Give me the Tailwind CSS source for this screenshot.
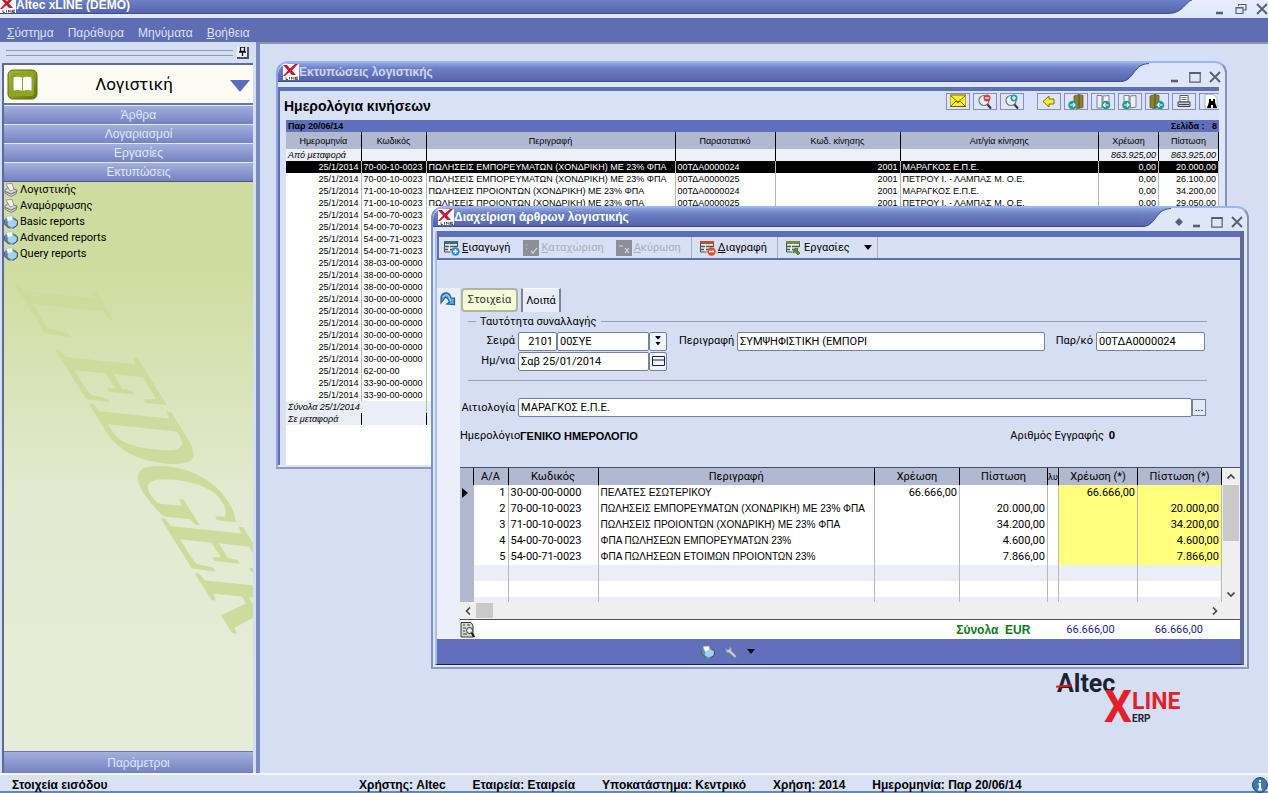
<!DOCTYPE html>
<html lang="el">
<head>
<meta charset="utf-8">
<title>Altec xLINE (DEMO)</title>
<script src="https://cdn.jsdelivr.net/npm/@tailwindcss/browser@4"></script>
</head>
<body class="flex h-screen flex-col overflow-hidden bg-[#d6def3] font-[Roboto,'Liberation_Sans',sans-serif] text-[11px] leading-4 text-black">

<svg class="absolute size-0" aria-hidden="true">
  <symbol id="app" viewBox="0 0 16 16"><rect width="16" height="16" fill="#fff"/><path d="M0 1h4l3 3.500L12 0h3L9 6.500 13 11h-4L6.500 8.200 2 12H0l5-5.500z" fill="#c01c34"/><path d="M3 13.200v2.300h2M6.500 13v2.500M8.500 15.500V13l2.500 2.500V13M15 13.200h-2.500v2.300H15M12.500 14.400h2" fill="none" stroke="#333" stroke-width=".8"/></symbol>
  <linearGradient id="tb" x1="0" y1="0" x2="0" y2="1"><stop offset="0" stop-color="#8fa6e2"/><stop offset=".3" stop-color="#6d7fc6"/><stop offset="1" stop-color="#5664ac"/></linearGradient>
  <symbol id="curve" viewBox="0 0 30 20"><path d="M0 0h30C20 1 18 6 13 12 9 17 6 19 0 19z" fill="url(#tb)"/><path d="M30 .5C20 1 18 6 13 12 9 17 6 18.500 0 18.500" fill="none" stroke="#3f4d8c" stroke-width="1"/></symbol>
  <symbol id="printer" viewBox="0 0 14 14"><path d="M1 7 5 4l8 3-1 4-5 2.500L1 10z" fill="#d9d9d4" stroke="#666" stroke-width=".8"/><path d="M2 1l6-.5 2 6-4 1.500z" fill="#fff" stroke="#777" stroke-width=".7"/><path d="M1.500 8.500 7 11l5.500-2.500" fill="none" stroke="#555" stroke-width=".9"/><path d="M8 12.500l3-1.500" stroke="#b5a642"/></symbol>
  <symbol id="report" viewBox="0 0 14 14"><path d="M0 5 3 2h6l5 4v4l-5 3.500H5L0 9z" fill="#5b8fb8"/><path d="M2 1.500l6-.5 1 4-5 2z" fill="#fff" stroke="#8aa9c4" stroke-width=".5"/><path d="M4 6.500l5-2 4 2-1 4-4 2-4-2z" fill="#a5d3ee"/><path d="M.5 5v4l4.500 4" stroke="#596672" stroke-width="1.200" fill="none"/><path d="M10.500 3l3 3v4L9 13.500" stroke="#4a5560" fill="none"/></symbol>
  <symbol id="form" viewBox="0 0 16 16"><path d="M1 2h12v9H1z" fill="#e9eee4"/><path d="M0 1h14v3H0z"/><path d="M1 6.500h4M6 6.500h7M1 9.500h3M6 9.500h6" stroke="#4b5560" stroke-width="1.500"/><path d="M.5 3v9h6M13.500 3v4" fill="none" stroke="#4b5560"/></symbol>
  <symbol id="book" viewBox="0 0 16 16"><path d="M6 2l5-1.500 4 1v12l-5 1-4-1z" fill="#8a8130" stroke="#55501c" stroke-width=".7"/><path d="M11 .5V14" stroke="#55501c"/></symbol>
  <symbol id="page" viewBox="0 0 16 16"><path d="M2 1.500h5V14H2zM8 2l6-.5V13l-6 1z" fill="#eef0f8" stroke="#667" stroke-width=".8"/></symbol>
  <symbol id="dotL" viewBox="0 0 16 16"><circle cx="4.500" cy="11" r="4.300" fill="#1f9a9a"/><path d="M2 11h5M5 8.800 7 11l-2 2.200" stroke="#fff" stroke-width="1.200" fill="none"/></symbol>
  <symbol id="dotR" viewBox="0 0 16 16"><circle cx="11" cy="11" r="4.300" fill="#1f9a9a"/><path d="M13.500 11h-5M10.500 8.800 8.500 11l2 2.200" stroke="#fff" stroke-width="1.200" fill="none"/></symbol>
  <symbol id="lens" viewBox="0 0 16 16"><circle cx="7" cy="6.500" r="5" fill="#eef1fa" stroke="#777" stroke-width="1.200"/><path d="M10.500 10.500 14 14.500" stroke="#333" stroke-width="2"/></symbol>
  <symbol id="min" viewBox="0 0 12 12"><path d="M2 10h7" stroke="#5a5f78" stroke-width="2.600"/></symbol>
  <symbol id="max" viewBox="0 0 12 12"><path d="M.8 1.500h10.400v9.700H.8z" fill="none" stroke="#5a5f78" stroke-width="1.200"/><path d="M.5 2h11" stroke="#5a5f78" stroke-width="2"/></symbol>
  <symbol id="close" viewBox="0 0 12 12"><path d="M1 1l10 10M11 1 1 11" stroke="#5a5f78" stroke-width="1.900"/></symbol>
</svg>

<!-- Application title bar -->
<header class="flex h-[18px] shrink-0 bg-linear-to-b from-[#e8eefc] to-[#dde6fa]">
  <div class="flex h-[14px] flex-1 items-end border-b border-[#3f4d8c] bg-linear-to-b from-[#6d7fc6] to-[#5664ac]">
    <svg class="size-4 shrink-0"><use href="#app"/></svg>
    <h1 class="font-['Liberation_Sans',sans-serif] text-xs leading-[15px] font-bold text-white">Altec xLINE (DEMO)</h1>
  </div>
  <svg class="h-[14px] w-6 shrink-0" viewBox="0 0 24 14"><defs><linearGradient id="tb2" x1="0" y1="0" x2="0" y2="1"><stop offset="0" stop-color="#6d7fc6"/><stop offset="1" stop-color="#5664ac"/></linearGradient></defs><path d="M0 0h24C17 2 15 13.500 0 13.500z" fill="url(#tb2)"/><path d="M24 0C17 2 15 13.500 0 13.500" fill="none" stroke="#3f4d8c"/></svg>
  <div class="flex w-[76px] shrink-0 items-center justify-end gap-[9px]">
    <button aria-label="Ελαχιστοποίηση" class="size-3"><svg class="size-3"><use href="#min"/></svg></button>
    <button aria-label="Επαναφορά" class="size-3"><svg class="size-3" viewBox="0 0 12 12"><path d="M3.500 3V1.500H11v5.500H8.500M1 4.500h7v6H1zM1 5h7" fill="none" stroke="#5a5f78" stroke-width="1.200"/></svg></button>
    <button aria-label="Κλείσιμο" class="size-3"><svg class="size-3"><use href="#close"/></svg></button>
  </div>
</header>

<nav class="flex h-6 shrink-0 items-center gap-[14px] bg-[#5f6db4] px-[7px] pt-[5px] font-['Liberation_Sans',sans-serif] text-xs text-[#dbe2f8]">
  <a href="#"><u>Σ</u>ύστημα</a><a href="#">Παράθυρα</a><a href="#">Μηνύματα</a><a href="#"><u>Β</u>οήθεια</a>
</nav>

<div class="flex min-h-0 flex-1">
  <!-- Module navigation -->
  <aside class="flex w-[260px] shrink-0 flex-col border-r-4 border-[#7c8bbd] pl-[2px]">
    <div class="flex h-[21px] shrink-0 items-center gap-1 pr-[7px] pl-1">
      <div class="h-[6px] flex-1 border-y border-[#8c96b4]"></div>
      <button aria-label="Καρφίτσωμα" class="flex size-3 items-center justify-center border-r-2 border-b-2 border-[#4d5468] bg-[#eef1fa]"><svg class="size-[9px]" viewBox="0 0 9 9"><path d="M2.500 0h4v4.500h-4zM1 5h7M4.500 5v4" stroke="#111" fill="none" stroke-width="1.300"/></svg></button>
    </div>
    <div class="mr-[3px] flex min-h-0 flex-1 flex-col border-t-2 border-l-2 border-[#5b6b95]">
      <div class="flex h-[38px] shrink-0 items-center bg-[#fdfcf4] px-[3px]">
        <svg class="size-[31px]" viewBox="0 0 31 31"><defs><linearGradient id="gr" x1="0" y1="0" x2="1" y2="1"><stop offset="0" stop-color="#a9b93c"/><stop offset=".5" stop-color="#8aa21c"/><stop offset="1" stop-color="#5f7410"/></linearGradient></defs><rect x="1" y="1" width="29" height="29" rx="5" fill="url(#gr)" stroke="#5d6e1a"/><rect x="4" y="4" width="23" height="23" rx="3" fill="#8fa52a"/><path d="M15.500 9C13 7.500 9 7.500 6.500 8.500v13c3-1 6.500-.5 9 .5 2.500-1 6-1.500 9-.5v-13C22 7.500 18 7.500 15.500 9z" fill="#fff"/><path d="M15.500 9v13" stroke="#8fa52a"/></svg>
        <h2 class="flex-1 text-center text-[17px] leading-6">Λογιστική</h2>
        <svg class="mt-1 h-3 w-5" viewBox="0 0 20 12"><path d="M0 0h20L10 12z" fill="#5b6dc0"/></svg>
      </div>
      <div class="flex shrink-0 flex-col border-t-2 border-b border-t-[#6a76a8] border-b-[#4a5683] font-['Liberation_Sans',sans-serif] text-xs text-[#dfe6fb]">
        <button class="h-[19px] border-t border-[#e3e9fa] bg-linear-to-b from-[#a5afdb] to-[#7482c2] pl-5">Άρθρα</button>
        <button class="h-[19px] border-t border-[#e3e9fa] bg-linear-to-b from-[#a5afdb] to-[#7482c2] pl-5">Λογαριασμοί</button>
        <button class="h-[19px] border-t border-[#e3e9fa] bg-linear-to-b from-[#a5afdb] to-[#7482c2] pl-5">Εργασίες</button>
        <button class="h-[19px] border-t border-[#e3e9fa] bg-linear-to-b from-[#a5afdb] to-[#7482c2] pl-5">Εκτυπώσεις</button>
      </div>
      <div class="relative min-h-0 flex-1 overflow-hidden bg-linear-to-b from-[#cfdc9f] from-15% via-[#e3ead0] via-55% to-[#e6ecd9]">
        <svg class="absolute inset-0 size-full" viewBox="0 0 250 570" preserveAspectRatio="xMinYMin slice" aria-hidden="true"><g fill="#cddb9c"><text x="-78 0 64 130 200 264" transform="translate(50 166) rotate(58) skewX(-38)" font-family="Liberation Serif, serif" font-weight="bold" font-size="100">LEDGER</text></g></svg>
        <ul class="relative">
          <li><a href="#" class="flex items-center gap-[2px]"><svg class="size-[14px]"><use href="#printer"/></svg>Λογιστικής</a></li>
          <li><a href="#" class="flex items-center gap-[2px]"><svg class="size-[14px]"><use href="#printer"/></svg>Αναμόρφωσης</a></li>
          <li><a href="#" class="flex items-center gap-[2px]"><svg class="size-[14px]"><use href="#report"/></svg>Basic reports</a></li>
          <li><a href="#" class="flex items-center gap-[2px]"><svg class="size-[14px]"><use href="#report"/></svg>Advanced reports</a></li>
          <li><a href="#" class="flex items-center gap-[2px]"><svg class="size-[14px]"><use href="#report"/></svg>Query reports</a></li>
        </ul>
      </div>
      <button class="h-[22px] shrink-0 border-t border-[#6a76a8] bg-linear-to-b from-[#a5afdb] to-[#7482c2] pl-5 font-['Liberation_Sans',sans-serif] text-xs text-[#dfe6fb]">Παράμετροι</button>
    </div>
  </aside>

  <!-- Desktop with floating windows -->
  <main class="relative flex-1 border-t-2 border-[#8b95a8]">

    <section aria-label="Εκτυπώσεις λογιστικής" class="absolute top-[17px] right-[41px] left-[16px] flex h-[408px] flex-col rounded-t-xl border-2 border-t-[#9db5ec] border-r-[#8694bb] border-b-[#8d9cc4] border-l-[#8ea6dc] bg-[#dde6fa] font-['Liberation_Sans',sans-serif]">
      <div class="flex h-6 shrink-0">
        <div class="flex h-[19px] flex-1 items-center rounded-tl-xl border-b border-[#3f4d8c] bg-linear-to-b from-[#8fa6e2] via-[#6d7fc6] via-30% to-[#5664ac] pl-[5px]">
          <svg class="size-4"><use href="#app"/></svg><h2 class="text-xs font-bold text-[#cdd6f3]">Εκτυπώσεις λογιστικής</h2>
        </div>
        <svg class="h-5 w-[30px] shrink-0"><use href="#curve"/></svg>
        <div class="flex w-[76px] shrink-0 items-center justify-end gap-2 pt-1 pr-1">
          <button aria-label="Ελαχιστοποίηση" class="size-3"><svg class="size-3"><use href="#min"/></svg></button>
          <button aria-label="Μεγιστοποίηση" class="size-3"><svg class="size-3"><use href="#max"/></svg></button>
          <button aria-label="Κλείσιμο" class="size-3"><svg class="size-3"><use href="#close"/></svg></button>
        </div>
      </div>
      <div class="mr-[6px] mb-[2px] flex flex-1 flex-col border-t-4 border-l-2 border-[#6070b4] bg-[#d9e1f6]">
        <div class="flex h-[29px] shrink-0 items-center justify-between pl-1">
          <h3 class="text-sm font-bold">Ημερολόγια κινήσεων</h3>
          <div class="mt-[2px] flex gap-[3px] self-start">
            <button aria-label="Αποστολή" class="flex h-[17px] w-6 justify-center border border-[#8191c4] bg-[#dfe5f6]"><svg class="size-4" viewBox="0 0 16 16"><path d="M0 1h16v11.500H0z" fill="#ffef2e" stroke="#6b6400"/><path d="M1 12l5-5 2 2 2-2 5 5M1 2l7 6 7-6" fill="none" stroke="#6b6400" stroke-width=".9"/></svg></button>
            <button aria-label="Σμίκρυνση" class="flex h-[17px] w-6 justify-center border border-[#8191c4] bg-[#dfe5f6]"><svg class="size-4" viewBox="0 0 16 16"><use href="#lens"/><circle cx="10" cy="4" r="3.500" fill="#d2463c"/><path d="M8 4h4" stroke="#fff" stroke-width="1.200"/></svg></button>
            <button aria-label="Μεγέθυνση" class="mr-[10px] flex h-[17px] w-6 justify-center border border-[#8191c4] bg-[#dfe5f6]"><svg class="size-4" viewBox="0 0 16 16"><use href="#lens"/><circle cx="10" cy="4" r="3.500" fill="#2a9c9c"/><path d="M8 4h4M10 2v4" stroke="#fff" stroke-width="1.200"/></svg></button>
            <button aria-label="Πίσω" class="flex h-[17px] w-6 justify-center border border-[#8191c4] bg-[#dfe5f6]"><svg class="size-4" viewBox="0 0 16 16"><path d="M2 7.500 8 2v3h5v5H8v3z" fill="#ffe92e" stroke="#7d7308"/></svg></button>
            <button aria-label="Πρώτη σελίδα" class="flex h-[17px] w-6 justify-center border border-[#8191c4] bg-[#dfe5f6]"><svg class="size-4" viewBox="0 0 16 16"><use href="#book"/><use href="#dotL"/></svg></button>
            <button aria-label="Προηγούμενη σελίδα" class="flex h-[17px] w-6 justify-center border border-[#8191c4] bg-[#dfe5f6]"><svg class="size-4" viewBox="0 0 16 16"><use href="#page"/><use href="#dotR"/></svg></button>
            <button aria-label="Επόμενη σελίδα" class="flex h-[17px] w-6 justify-center border border-[#8191c4] bg-[#dfe5f6]"><svg class="size-4" viewBox="0 0 16 16"><use href="#page"/><use href="#dotL"/></svg></button>
            <button aria-label="Τελευταία σελίδα" class="flex h-[17px] w-6 justify-center border border-[#8191c4] bg-[#dfe5f6]"><svg class="size-4" viewBox="0 0 16 16"><g transform="translate(-5 0)"><use href="#book" width="16" height="16"/></g><use href="#dotR"/></svg></button>
            <button aria-label="Εκτύπωση" class="flex h-[17px] w-6 justify-center border border-[#8191c4] bg-[#dfe5f6]"><svg class="size-4" viewBox="0 0 16 16"><path d="M4 1.500h8V8H4z" fill="#fff" stroke="#555"/><path d="M5.500 3.500h5M5.500 5.500h5" stroke="#777"/><path d="M2 8h12v4.500H2z" fill="#c9ccd6" stroke="#444"/><path d="M3 10.500h10" stroke="#444"/></svg></button>
            <button aria-label="Εύρεση" class="flex h-[17px] w-5 justify-end border border-r-0 border-[#8191c4] bg-[#dfe5f6]"><svg class="size-4" viewBox="0 0 16 16"><path d="M2 .5h8l4 3V14H2z" fill="#fff" stroke="#999" stroke-width=".6"/><path d="M6 5h2v2h2V5h2v3l2 6h-4v-3H8v3H4l2-6z" fill="#000"/></svg></button>
          </div>
        </div>
        <div class="ml-[6px] flex flex-1 flex-col bg-white text-[9px] leading-3">
          <div class="flex h-3 shrink-0 justify-between bg-[#5f6fbb] px-[2px] font-bold"><span>Παρ 20/06/14</span><span class="whitespace-pre">Σελίδα :   8</span></div>
          <table class="w-full table-fixed border-collapse whitespace-nowrap [&_td]:overflow-hidden [&_td]:border-r [&_td]:border-[#b8b8b8] [&_td]:px-[2px] [&_td]:py-0 [&_th]:h-[17px] [&_th]:border-r [&_th]:border-black [&_th]:bg-[#b1b9d2] [&_th]:p-0 [&_th]:font-normal">
            <colgroup><col class="w-[75px]"><col class="w-[65px]"><col class="w-[249px]"><col class="w-[100px]"><col class="w-[125px]"><col><col class="w-[60px]"><col class="w-[60px]"></colgroup>
            <thead><tr><th>Ημερομηνία</th><th>Κωδικός</th><th>Περιγραφή</th><th>Παραστατικό</th><th>Κωδ. κίνησης</th><th>Αιτ/γία κίνησης</th><th>Χρέωση</th><th>Πίστωση</th></tr></thead>
            <tbody id="journal">
              <tr class="h-3 bg-[#eef0f9] italic [&_td]:border-black"><td>Από μεταφορά</td><td></td><td></td><td></td><td></td><td></td><td class="text-right">863.925,00</td><td class="text-right">863.925,00</td></tr>
            </tbody>
            <tfoot class="bg-[#eceef8] italic">
              <tr class="h-3"><td colspan="2">Σύνολα 25/1/2014</td><td colspan="6"></td></tr>
              <tr class="h-3 [&_td]:border-black"><td>Σε μεταφορά</td><td></td><td colspan="6"></td></tr>
            </tfoot>
          </table>
        </div>
      </div>
    </section>

    <section aria-label="Διαχείριση άρθρων λογιστικής" class="absolute top-[162px] right-[19px] left-[171px] flex h-[463px] flex-col rounded-t-xl border-2 border-t-[#9db5ec] border-r-[#8694bb] border-b-[#8d9cc4] border-l-[#7d92cc] bg-[#dde6fa]">
      <div class="flex h-[23px] shrink-0">
        <div class="flex h-[19px] flex-1 items-center rounded-tl-xl border-b border-[#3f4d8c] bg-linear-to-b from-[#8fa6e2] via-[#6d7fc6] via-30% to-[#5664ac] pl-[5px]">
          <svg class="size-4"><use href="#app"/></svg><h2 class="font-['Liberation_Sans',sans-serif] text-xs font-bold text-white">Διαχείριση άρθρων λογιστικής</h2>
        </div>
        <svg class="h-5 w-[30px] shrink-0"><use href="#curve"/></svg>
        <div class="flex w-[76px] shrink-0 items-center justify-end gap-2 pt-1 pr-1">
          <svg class="size-2" viewBox="0 0 8 8"><path d="M4 0l4 4-4 4-4-4z" fill="#5a5f78"/></svg>
          <button aria-label="Ελαχιστοποίηση" class="size-3"><svg class="size-3"><use href="#min"/></svg></button>
          <button aria-label="Μεγιστοποίηση" class="size-3"><svg class="size-3"><use href="#max"/></svg></button>
          <button aria-label="Κλείσιμο" class="size-3"><svg class="size-3"><use href="#close"/></svg></button>
        </div>
      </div>
      <div class="mr-[3px] mb-[2px] ml-[2px] flex flex-1 flex-col border-r-4 border-b border-l-2 border-r-[#5f6a94] border-b-[#1c2340] border-l-[#a9bfee]">
        <div class="flex h-[29px] shrink-0 items-stretch border-t-[6px] border-b-2 border-l-2 border-[#5f6db4] bg-[#d8e0f5]">
          <button class="flex items-center gap-[2px] pr-[13px] pl-[5px]"><svg class="size-4" viewBox="0 0 16 16"><use href="#form" fill="#3f6f86"/><circle cx="11.500" cy="11.500" r="4.200" fill="#2b8fc4"/><path d="M9 11.500h5M11.500 9v5" stroke="#fff" stroke-width="1.600"/></svg><span><u>Ε</u>ισαγωγή</span></button>
          <button disabled class="flex items-center gap-[2px] pr-3 text-[#a9adba]"><svg class="size-4" viewBox="0 0 16 16"><path d="M0 0h16v16H0z" fill="#8d8f96"/><path d="M3 5h1M3 9h1M8 11l2 2 4-5" stroke="#d5d8e2" stroke-width="1.200" fill="none"/></svg><span><u>Κ</u>αταχώριση</span></button>
          <button disabled class="flex items-center gap-[2px] pr-[10px] text-[#a9adba]"><svg class="size-4" viewBox="0 0 16 16"><path d="M0 0h16v16H0z" fill="#8d8f96"/><path d="M3 6h4M9 8l4 5M13 8l-4 5" stroke="#d5d8e2" stroke-width="1.200" fill="none"/></svg><span><u>Α</u>κύρωση</span></button>
          <button class="flex items-center gap-[2px] border-l border-[#a9afbf] pr-[10px] pl-2"><svg class="size-4" viewBox="0 0 16 16"><use href="#form" fill="#b9532b"/><circle cx="11.500" cy="11.500" r="4.200" fill="#e0532a"/><path d="M9 11.500h5" stroke="#fff" stroke-width="1.600"/></svg><span><u>Δ</u>ιαγραφή</span></button>
          <button class="flex items-center gap-[2px] border-x border-[#a9afbf] pr-[5px] pl-2"><svg class="size-4" viewBox="0 0 16 16"><use href="#form" fill="#6f8f3a"/><path d="M8 9l4-1-1 2 3 3-2 2-3-3-2 1z" fill="#4f9a2c" stroke="#2f6a18" stroke-width=".6"/></svg><span>Εργασίες</span><svg class="ml-3 h-[5px] w-2" viewBox="0 0 8 5"><path d="M0 0h8L4 5z"/></svg></button>
        </div>

        <div class="flex flex-1 bg-[#d6def3]">
          <div class="mt-7 w-[23px] shrink-0 bg-[#eaeffa] pt-[3px] pl-[3px]">
            <button aria-label="Ανανέωση" class="size-4"><svg class="size-4" viewBox="0 0 16 16"><path d="M1 12V7C1 2 8 0 10 4l1 3h3.500v6.500L7 13l2.500-2C7 5 5 6 4 8z" fill="#5ea4d8" stroke="#1f5f96" stroke-width="1.200"/><path d="M3 6c2-3 5-3 6 0l1.500 4" stroke="#bfe0f6" fill="none"/></svg></button>
          </div>
          <div class="flex min-w-0 flex-1 flex-col pt-7">
            <div class="flex gap-[3px]" role="tablist">
              <button role="tab" aria-selected="true" class="ml-[1px] h-6 w-[57px] rounded-sm border-2 border-[#aeb6a0] bg-[#f4fbd6] text-[#333]">Στοιχεία</button>
              <button role="tab" aria-selected="false" class="h-6 w-10 border-t border-r-2 border-l-2 border-t-white border-r-[#7d8599] border-l-[#7d8599] bg-[#e9edf9]">Λοιπά</button>
            </div>
            <div class="mr-[33px] ml-2 border-b border-[#98a2b4] pb-[9px]">
              <div class="flex h-[19px] items-center gap-1"><span class="h-px w-2 bg-[#98a2b4]"></span><span>Ταυτότητα συναλλαγής</span><span class="h-px flex-1 bg-[#98a2b4]"></span></div>
              <div class="flex h-5 items-center">
                <label for="series" class="w-[50px] pr-[3px] text-right">Σειρά</label>
                <input id="series" value="2101" class="h-[19px] w-[39px] rounded-xs border border-[#7281a5] bg-white pr-[3px] text-right">
                <input aria-label="Κωδικός σειράς" value="00ΣΥΕ" class="h-[19px] w-[92px] rounded-xs border border-[#7281a5] bg-white px-[2px]">
                <button aria-label="Επιλογή σειράς" class="flex h-[19px] w-[18px] items-center justify-center rounded-xs border border-[#7281a5] bg-[#f3f5fc]"><svg class="h-[10px] w-2" viewBox="0 0 8 10"><path d="M1.500 0h5v1L4 3.500 1.500 1zM1.500 6h5L4 9.500z"/></svg></button>
                <label for="desc" class="ml-3 w-[58px] pr-[3px] text-right">Περιγραφή</label>
                <input id="desc" value="ΣΥΜΨΗΦΙΣΤΙΚΗ (ΕΜΠΟΡΙ" class="h-[19px] min-w-0 flex-1 rounded-xs border border-[#7281a5] bg-white px-[2px]">
                <label for="doc" class="w-[51px] pr-[3px] text-right">Παρ/κό</label>
                <input id="doc" value="00ΤΔΑ0000024" class="mr-[2px] h-[19px] w-[109px] rounded-xs border border-[#7281a5] bg-white px-[2px]">
              </div>
              <div class="flex h-5 items-center">
                <label for="date" class="w-[50px] pr-[3px] text-right">Ημ/νια</label>
                <input id="date" value="Σαβ 25/01/2014" class="h-[19px] w-[131px] rounded-xs border border-[#7281a5] bg-white px-[2px]">
                <button aria-label="Ημερολόγιο" class="flex h-[19px] w-[18px] items-center justify-center rounded-xs border border-[#7281a5] bg-[#f3f5fc]"><svg class="h-[10px] w-[13px]" viewBox="0 0 13 10"><path d="M.5.5h12v9H.5zM.5 4h12" fill="none" stroke="#222"/></svg></button>
              </div>
            </div>
            <div class="mt-[17px] mr-[34px] flex h-[19px] items-center">
              <label for="reason" class="w-[58px] pr-[3px] text-right">Αιτιολογία</label>
              <input id="reason" value="ΜΑΡΑΓΚΟΣ Ε.Π.Ε." class="h-[19px] min-w-0 flex-1 rounded-xs border border-[#7281a5] bg-white px-[2px]">
              <button aria-label="Αναζήτηση" class="h-[17px] w-[14px] border border-[#7281a5] bg-[#e4e9f8] leading-3">...</button>
            </div>
            <div class="mt-[9px] mb-[21px] flex h-5 items-center">
              <span class="w-[60px] whitespace-nowrap">Ημερολόγιο</span><b class="flex-1 font-['Liberation_Sans',sans-serif]">ΓΕΝΙΚΟ ΗΜΕΡΟΛΟΓΙΟ</b><span class="mr-[125px]">Αριθμός Εγγραφής <b class="ml-[2px]">0</b></span>
            </div>

            <div class="flex h-[135px] shrink-0 overflow-hidden border-t border-[#4b5060]">
              <table class="w-full table-fixed border-collapse bg-white whitespace-nowrap [&_td]:h-4 [&_td]:overflow-hidden [&_td]:border-r [&_td]:border-[#b8b8b8] [&_td]:px-[2px] [&_td]:py-0 [&_th]:h-[17px] [&_th]:overflow-hidden [&_th]:border-r [&_th]:border-black [&_th]:bg-[#b1b9d2] [&_th]:p-0 [&_th]:font-normal">
                <colgroup><col class="w-[13px]"><col class="w-[35px]"><col class="w-[90px]"><col><col class="w-[85px]"><col class="w-[88px]"><col class="w-[11px]"><col class="w-[79px]"><col class="w-[84px]"></colgroup>
                <thead><tr><th></th><th>Α/Α</th><th>Κωδικός</th><th>Περιγραφή</th><th>Χρέωση</th><th>Πίστωση</th><th class="text-[9px]">λυ</th><th>Χρέωση (*)</th><th>Πίστωση (*)</th></tr></thead>
                <tbody id="entries"></tbody>
              </table>
              <div class="flex w-[18px] shrink-0 flex-col items-center bg-[#efefef]">
                <svg class="my-[6px] h-[5px] w-2 shrink-0" viewBox="0 0 8 5"><path d="M.5 4.500 4 1l3.500 3.500" fill="none" stroke="#444" stroke-width="1.600"/></svg>
                <div class="h-14 w-4 shrink-0 bg-[#c9c9c9]"></div>
                <svg class="mt-auto mb-[5px] h-[5px] w-2 shrink-0" viewBox="0 0 8 5"><path d="M.5.5 4 4 7.500.500" fill="none" stroke="#444" stroke-width="1.600"/></svg>
              </div>
            </div>
            <div class="flex h-[17px] shrink-0 items-center bg-[#efefef]">
              <svg class="mx-[5px] h-2 w-[6px]" viewBox="0 0 6 8"><path d="M5 .5 1.500 4 5 7.500" fill="none" stroke="#444" stroke-width="1.600"/></svg>
              <div class="h-[15px] w-[17px] bg-[#c9c9c9]"></div>
              <svg class="mr-[22px] ml-auto h-2 w-[6px]" viewBox="0 0 6 8"><path d="M1 .5 4.500 4 1 7.500" fill="none" stroke="#444" stroke-width="1.600"/></svg>
            </div>
            <div class="flex h-5 shrink-0 items-center border-t border-[#4b5060] bg-white pr-[37px] text-[#1c1c8c]">
              <button aria-label="Προεπισκόπηση" class="mr-auto size-4"><svg class="size-4" viewBox="0 0 16 16"><path d="M1 .5h10l2 3V15H1z" fill="#d7dad2" stroke="#333"/><path d="M3 3h2M7 3h3M3 6h3M3 9h2M3 12h4" stroke="#444"/><circle cx="9.500" cy="8.500" r="3" fill="#dff0f0" stroke="#333"/><path d="M11.500 11l3 4" stroke="#111" stroke-width="1.800"/></svg></button>
              <b class="font-['Liberation_Sans',sans-serif] text-xs whitespace-pre text-[#0b7a1c]">Σύνολα  EUR</b><span class="ml-9">66.666,00</span><span class="ml-10">66.666,00</span>
            </div>
          </div>
        </div>
        <div class="flex h-[25px] shrink-0 items-center bg-[#6070bb]">
          <svg class="ml-[264px] size-[14px]"><use href="#report"/></svg>
          <svg class="ml-[9px] size-[14px]" viewBox="0 0 14 14"><path d="M1.500 2.500 3.500 5 5.500 4 5 1.500l2 1.500.5 3 5 5-1.500 2-5.500-5-3-.5z" fill="#c9ccd4" stroke="#7c8090" stroke-width=".7"/></svg>
          <svg class="ml-[9px] h-[5px] w-2" viewBox="0 0 8 5"><path d="M0 0h8L4 5z"/></svg>
        </div>
      </div>
    </section>

    <!-- Brand mark -->
    <div class="absolute top-[624px] right-[86px] h-[60px] w-[128px] font-bold">
      <span class="absolute top-0 left-[3px] text-[25px] leading-8 text-[#1d2230]">Altec</span>
      <span class="absolute top-[17px] left-[2px] h-[2px] w-4 -rotate-6 bg-[#e0202c]"></span>
      <span class="absolute top-[13px] left-[50px] text-[44px] leading-[52px] text-[#e31f2b]">X</span>
      <span class="absolute top-[20px] left-[78px] text-[23px] leading-7 text-[#e31f2b]">LINE</span>
      <span class="absolute top-[45px] left-[78px] text-[10px] leading-3 text-[#1d2230]">ERP</span>
    </div>
  </main>
</div>

<footer class="flex h-[20px] shrink-0 items-center border-t-2 border-b-2 border-t-[#f4f7ff] border-b-[#5f86bd] bg-[#d9e1f5] pt-[3px] pl-3 font-['Liberation_Sans',sans-serif] text-xs font-bold">
  <span class="w-[347px]">Στοιχεία εισόδου</span>
  <span class="mr-[27px]">Χρήστης: Altec</span><span class="mr-[27px]">Εταιρεία: Εταιρεία</span><span class="mr-[27px]">Υποκατάστημα: Κεντρικό</span><span class="mr-[27px]">Χρήση: 2014</span><span>Ημερομηνία: Παρ 20/06/14</span>
  <svg class="ml-auto size-4" viewBox="0 0 16 16"><circle cx="8" cy="8" r="7.500" fill="#3f79ad" stroke="#234f7c"/><path d="M8 3v2M6.500 7H8v5M6 12.500h4" stroke="#fff" stroke-width="2" fill="none"/></svg>
</footer>

<script>
  const E = 'ΠΩΛΗΣΕΙΣ ΕΜΠΟΡΕΥΜΑΤΩΝ (ΧΟΝΔΡΙΚΗ) ΜΕ 23% ΦΠΑ', P = 'ΠΩΛΗΣΕΙΣ ΠΡΟΙΟΝΤΩΝ (ΧΟΝΔΡΙΚΗ) ΜΕ 23% ΦΠΑ';
  const M = 'ΜΑΡΑΓΚΟΣ Ε.Π.Ε.', L = 'ΠΕΤΡΟΥ Ι. - ΛΑΜΠΑΣ Μ. Ο.Ε.';
  const journal = [
    ['70-00-10-0023', E, '00ΤΔΑ0000024', M, '20.000,00'], ['70-00-10-0023', E, '00ΤΔΑ0000025', L, '26.100,00'],
    ['71-00-10-0023', P, '00ΤΔΑ0000024', M, '34.200,00'], ['71-00-10-0023', P, '00ΤΔΑ0000025', L, '29.050,00'],
    ...['54-00-70-0023', '54-00-70-0023', '54-00-71-0023', '54-00-71-0023', '38-03-00-0000', '38-00-00-0000', '38-00-00-0000',
      '30-00-00-0000', '30-00-00-0000', '30-00-00-0000', '30-00-00-0000', '30-00-00-0000', '30-00-00-0000', '62-00-00', '33-90-00-0000', '33-90-00-0000'].map(c => [c, '', '', '', ''])
  ];
  document.getElementById('journal').insertAdjacentHTML('beforeend', journal.map((r, i) =>
    `<tr class="${i ? 'h-3' : 'h-3 bg-black text-white'}"><td class="text-right">25/1/2014</td><td>${r[0]}</td><td>${r[1]}</td><td>${r[2]}</td><td class="text-right">${r[2] && '2001'}</td><td>${r[3]}</td><td class="text-right">${r[4] && '0,00'}</td><td class="text-right">${r[4]}</td></tr>`).join(''));
  const entries = [
    ['30-00-00-0000', 'ΠΕΛΑΤΕΣ ΕΣΩΤΕΡΙΚΟΥ', '66.666,00', ''], ['70-00-10-0023', E, '', '20.000,00'], ['71-00-10-0023', P, '', '34.200,00'],
    ['54-00-70-0023', 'ΦΠΑ ΠΩΛΗΣΕΩΝ ΕΜΠΟΡΕΥΜΑΤΩΝ 23%', '', '4.600,00'], ['54-00-71-0023', 'ΦΠΑ ΠΩΛΗΣΕΩΝ ΕΤΟΙΜΩΝ ΠΡΟΙΟΝΤΩΝ 23%', '', '7.866,00']
  ];
  const blank = cls => `<tr class="${cls}"><td class="bg-[#b1b9d2]"></td>${'<td></td>'.repeat(8)}</tr>`;
  document.getElementById('entries').innerHTML = entries.map((r, i) =>
    `<tr><td class="bg-[#b1b9d2]">${i ? '' : '<svg class="h-[10px] w-[6px]" viewBox="0 0 6 10"><path d="M0 0l6 5-6 5z"/></svg>'}</td><td class="text-right">${i + 1}</td><td>${r[0]}</td><td class="font-['Liberation_Sans',sans-serif] text-[10px]">${r[1]}</td><td class="text-right">${r[2]}</td><td class="text-right">${r[3]}</td><td></td><td class="bg-[#ffff7d] text-right">${r[2]}</td><td class="bg-[#ffff7d] text-right">${r[3]}</td></tr>`).join('')
    + blank('bg-[#eceef8]') + blank('') + blank('bg-[#eceef8]');
</script>
</body>
</html>
